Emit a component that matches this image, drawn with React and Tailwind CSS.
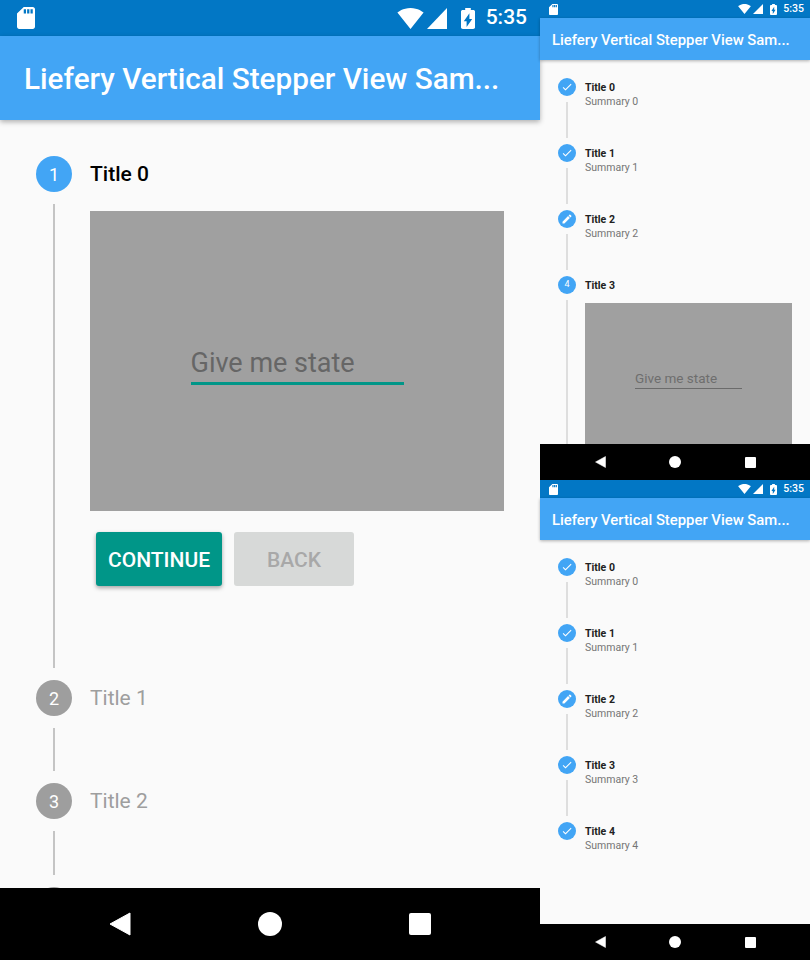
import clsx from 'clsx'

function StatusBar({ large }) {
  return (
    <div className={clsx('flex shrink-0 items-center bg-[#0277c5] text-white', large ? 'h-9 pl-[17px] pr-[13px]' : 'h-[18px] pl-[9px] pr-[6px]')}>
      <svg viewBox="4 2 16 20" preserveAspectRatio="none" className={large ? 'h-[22px] w-[18px]' : 'h-[11px] w-[9px]'} fill="currentColor">
        <path d="M18 2h-8L4 8v12c0 1.1.9 2 2 2h12c1.1 0 2-.9 2-2V4c0-1.1-.9-2-2-2zm-6 6h-2V4h2v4zm3 0h-2V4h2v4zm3 0h-2V4h2v4z" />
      </svg>
      <svg viewBox="0 3 24 18.5" preserveAspectRatio="none" className={clsx('ml-auto', large ? 'h-[21px] w-[27px]' : 'h-[10px] w-[13px]')} fill="currentColor">
        <path d="M12.01 21.49L23.64 7c-.45-.34-4.93-4-11.64-4C5.28 3 .81 6.66.36 7l11.64 14.5.01-.01z" />
      </svg>
      <svg viewBox="2 2 20 20" preserveAspectRatio="none" className={large ? 'ml-[3px] h-[21px] w-5' : 'ml-[2px] h-[10px] w-[10px]'} fill="currentColor">
        <path d="M2 22h20V2z" />
      </svg>
      <svg viewBox="7 2 10 20" preserveAspectRatio="none" className={large ? 'ml-[14px] h-[21px] w-[14px]' : 'ml-[7px] h-[11px] w-[7px]'} fill="currentColor">
        <path d="M15.67 4H14V2h-4v2H8.33C7.6 4 7 4.6 7 5.33v15.33C7 21.4 7.6 22 8.33 22h7.33c.74 0 1.34-.6 1.34-1.33V5.33C17 4.6 16.4 4 15.67 4zM11 20v-5.5H9L13 7v5.5h2L11 20z" />
      </svg>
      <span className={clsx('font-medium', large ? 'ml-[11px] text-[21px]' : 'ml-[6px] text-[10.5px]')}>5:35</span>
    </div>
  )
}

function AppBar({ large }) {
  return (
    <div className={clsx('relative z-10 flex shrink-0 items-center bg-[#42a5f5] font-medium text-white', large ? 'h-[84px] px-6 pt-[2px] text-[29.7px] shadow-[0_2px_5px_rgba(0,0,0,0.3)]' : 'h-[42px] px-3 pt-[2px] text-[14.85px] shadow-[0_1px_3px_rgba(0,0,0,0.3)]')}>
      Liefery Vertical Stepper View Sam...
    </div>
  )
}

function NavBar({ large }) {
  return (
    <div className={clsx('flex shrink-0 items-center justify-center bg-black', large ? 'h-[72px]' : 'h-9')}>
      <div className={clsx('flex items-center justify-center', large ? 'w-[150px]' : 'w-[75px]')}>
        <svg viewBox="0 0 22 24" className={large ? 'h-6 w-[22px]' : 'h-3 w-[11px]'} fill="white">
          <path d="M21 1 L1 12 L21 23 Z" stroke="white" strokeLinejoin="round" />
        </svg>
      </div>
      <div className={clsx('flex items-center justify-center', large ? 'w-[150px]' : 'w-[75px]')}>
        <div className={clsx('rounded-full bg-white', large ? 'size-6' : 'size-3')} />
      </div>
      <div className={clsx('flex items-center justify-center', large ? 'w-[150px]' : 'w-[75px]')}>
        <div className={clsx('bg-white', large ? 'size-[22px] rounded-[2px]' : 'size-[11px] rounded-[1px]')} />
      </div>
    </div>
  )
}

function LargeStep({ number, title, active, children, bodyClass }) {
  return (
    <div>
      <div className="flex h-9 items-center gap-[18px]">
        <div className={clsx('flex size-9 items-center justify-center rounded-full text-[18px] text-white', active ? 'bg-[#42a5f5]' : 'bg-[#9e9e9e]')}>
          {number}
        </div>
        <span className={clsx('pt-[2px] text-[21px]', active ? 'font-medium text-black' : 'text-[#9e9e9e]')}>{title}</span>
      </div>
      <div className={clsx('flex', bodyClass)}>
        <div className="flex w-9 shrink-0 justify-center py-3">
          <div className="w-[1.5px] bg-[#c4c4c4]" />
        </div>
        {children}
      </div>
    </div>
  )
}

function LargePanel() {
  return (
    <div className="flex h-[960px] w-[540px] shrink-0 flex-col">
      <StatusBar large />
      <AppBar large />
      <div className="flex-1 overflow-hidden bg-[#fafafa] pl-9 pr-9 pt-9">
        <LargeStep number="1" title="Title 0" active bodyClass="h-[488px]">
          <div className="ml-[18px] flex-1 pt-[19px]">
            <div className="flex h-[300px] items-center justify-center bg-[#a0a0a0] pt-2">
              <div className="w-[213px] border-b-[3px] border-[#009688] pb-[1px] text-[27px] leading-[36px] text-[#666666]">Give me state</div>
            </div>
            <div className="ml-[6px] mt-[21px] flex gap-3 text-[21px] font-medium">
              <div className="flex h-[54px] w-[126px] items-center justify-center rounded-[3px] bg-[#009688] pt-[3px] text-white shadow-[0_2px_4px_rgba(0,0,0,0.35)]">CONTINUE</div>
              <div className="flex h-[54px] w-[120px] items-center justify-center rounded-[3px] bg-[#d7d9d8] pt-[3px] text-[#a8a8a8]">BACK</div>
            </div>
          </div>
        </LargeStep>
        <LargeStep number="2" title="Title 1" bodyClass="h-[67px]" />
        <LargeStep number="3" title="Title 2" bodyClass="h-[68px]" />
        <div className="size-9 rounded-full bg-[#9e9e9e]" />
      </div>
      <NavBar large />
    </div>
  )
}

function StepIcon({ icon }) {
  if (icon === 'edit') {
    return (
      <svg viewBox="0 0 24 24" className="size-3" fill="white">
        <path d="M3 17.25V21h3.75L17.81 9.94l-3.75-3.75L3 17.25zM20.71 7.04c.39-.39.39-1.02 0-1.41l-2.34-2.34c-.39-.39-1.02-.39-1.41 0l-1.83 1.83 3.75 3.75 1.83-1.83z" />
      </svg>
    )
  }
  return (
    <svg viewBox="0 0 24 24" className="size-3" fill="white">
      <path d="M9 16.17L4.83 12l-1.42 1.41L9 19 21 7l-1.41-1.41z" />
    </svg>
  )
}

function SmallStep({ title, summary, icon, last }) {
  return (
    <div className="flex h-[66px]">
      <div className="flex w-[18px] shrink-0 flex-col items-center">
        <div className="flex size-[18px] shrink-0 items-center justify-center rounded-full bg-[#42a5f5]">
          <StepIcon icon={icon} />
        </div>
        {!last && <div className="my-[6px] w-[2px] flex-1 bg-[#dedede]" />}
      </div>
      <div className="ml-[9px] flex-1">
        <div className="h-[18px] text-[10.5px] font-bold leading-[20px] text-[#212121]">{title}</div>
        <div className="text-[10.5px] leading-[11px] text-[#757575]">{summary}</div>
      </div>
    </div>
  )
}

function SmallPanel({ children }) {
  return (
    <div className="flex h-[480px] w-[270px] flex-col">
      <StatusBar />
      <AppBar />
      <div className="flex-1 overflow-hidden bg-[#fafafa] px-[18px] pt-[18px]">{children}</div>
      <NavBar />
    </div>
  )
}

export default function App() {
  return (
    <div className="flex h-[960px] w-[810px] overflow-hidden font-['Roboto',sans-serif]">
      <LargePanel />
      <div className="flex w-[270px] flex-col">
        <SmallPanel>
          <SmallStep title="Title 0" summary="Summary 0" icon="check" />
          <SmallStep title="Title 1" summary="Summary 1" icon="check" />
          <SmallStep title="Title 2" summary="Summary 2" icon="edit" />
          <div className="flex">
            <div className="flex w-[18px] shrink-0 flex-col items-center">
              <div className="flex size-[18px] shrink-0 items-center justify-center rounded-full bg-[#42a5f5] text-[9px] text-white">4</div>
              <div className="mt-[6px] h-[150px] w-[2px] bg-[#dedede]" />
            </div>
            <div className="ml-[9px] flex-1">
              <div className="h-[18px] text-[10.5px] font-bold leading-[20px] text-[#212121]">Title 3</div>
              <div className="mt-[9px] flex h-[150px] items-start justify-center bg-[#a0a0a0] pt-[66px]">
                <div className="w-[107px] border-b border-[#6b6b6b] text-[13.5px] leading-[19px] text-[#6e6e6e]">Give me state</div>
              </div>
            </div>
          </div>
        </SmallPanel>
        <SmallPanel>
          <SmallStep title="Title 0" summary="Summary 0" icon="check" />
          <SmallStep title="Title 1" summary="Summary 1" icon="check" />
          <SmallStep title="Title 2" summary="Summary 2" icon="edit" />
          <SmallStep title="Title 3" summary="Summary 3" icon="check" />
          <SmallStep title="Title 4" summary="Summary 4" icon="check" last />
        </SmallPanel>
      </div>
    </div>
  )
}
